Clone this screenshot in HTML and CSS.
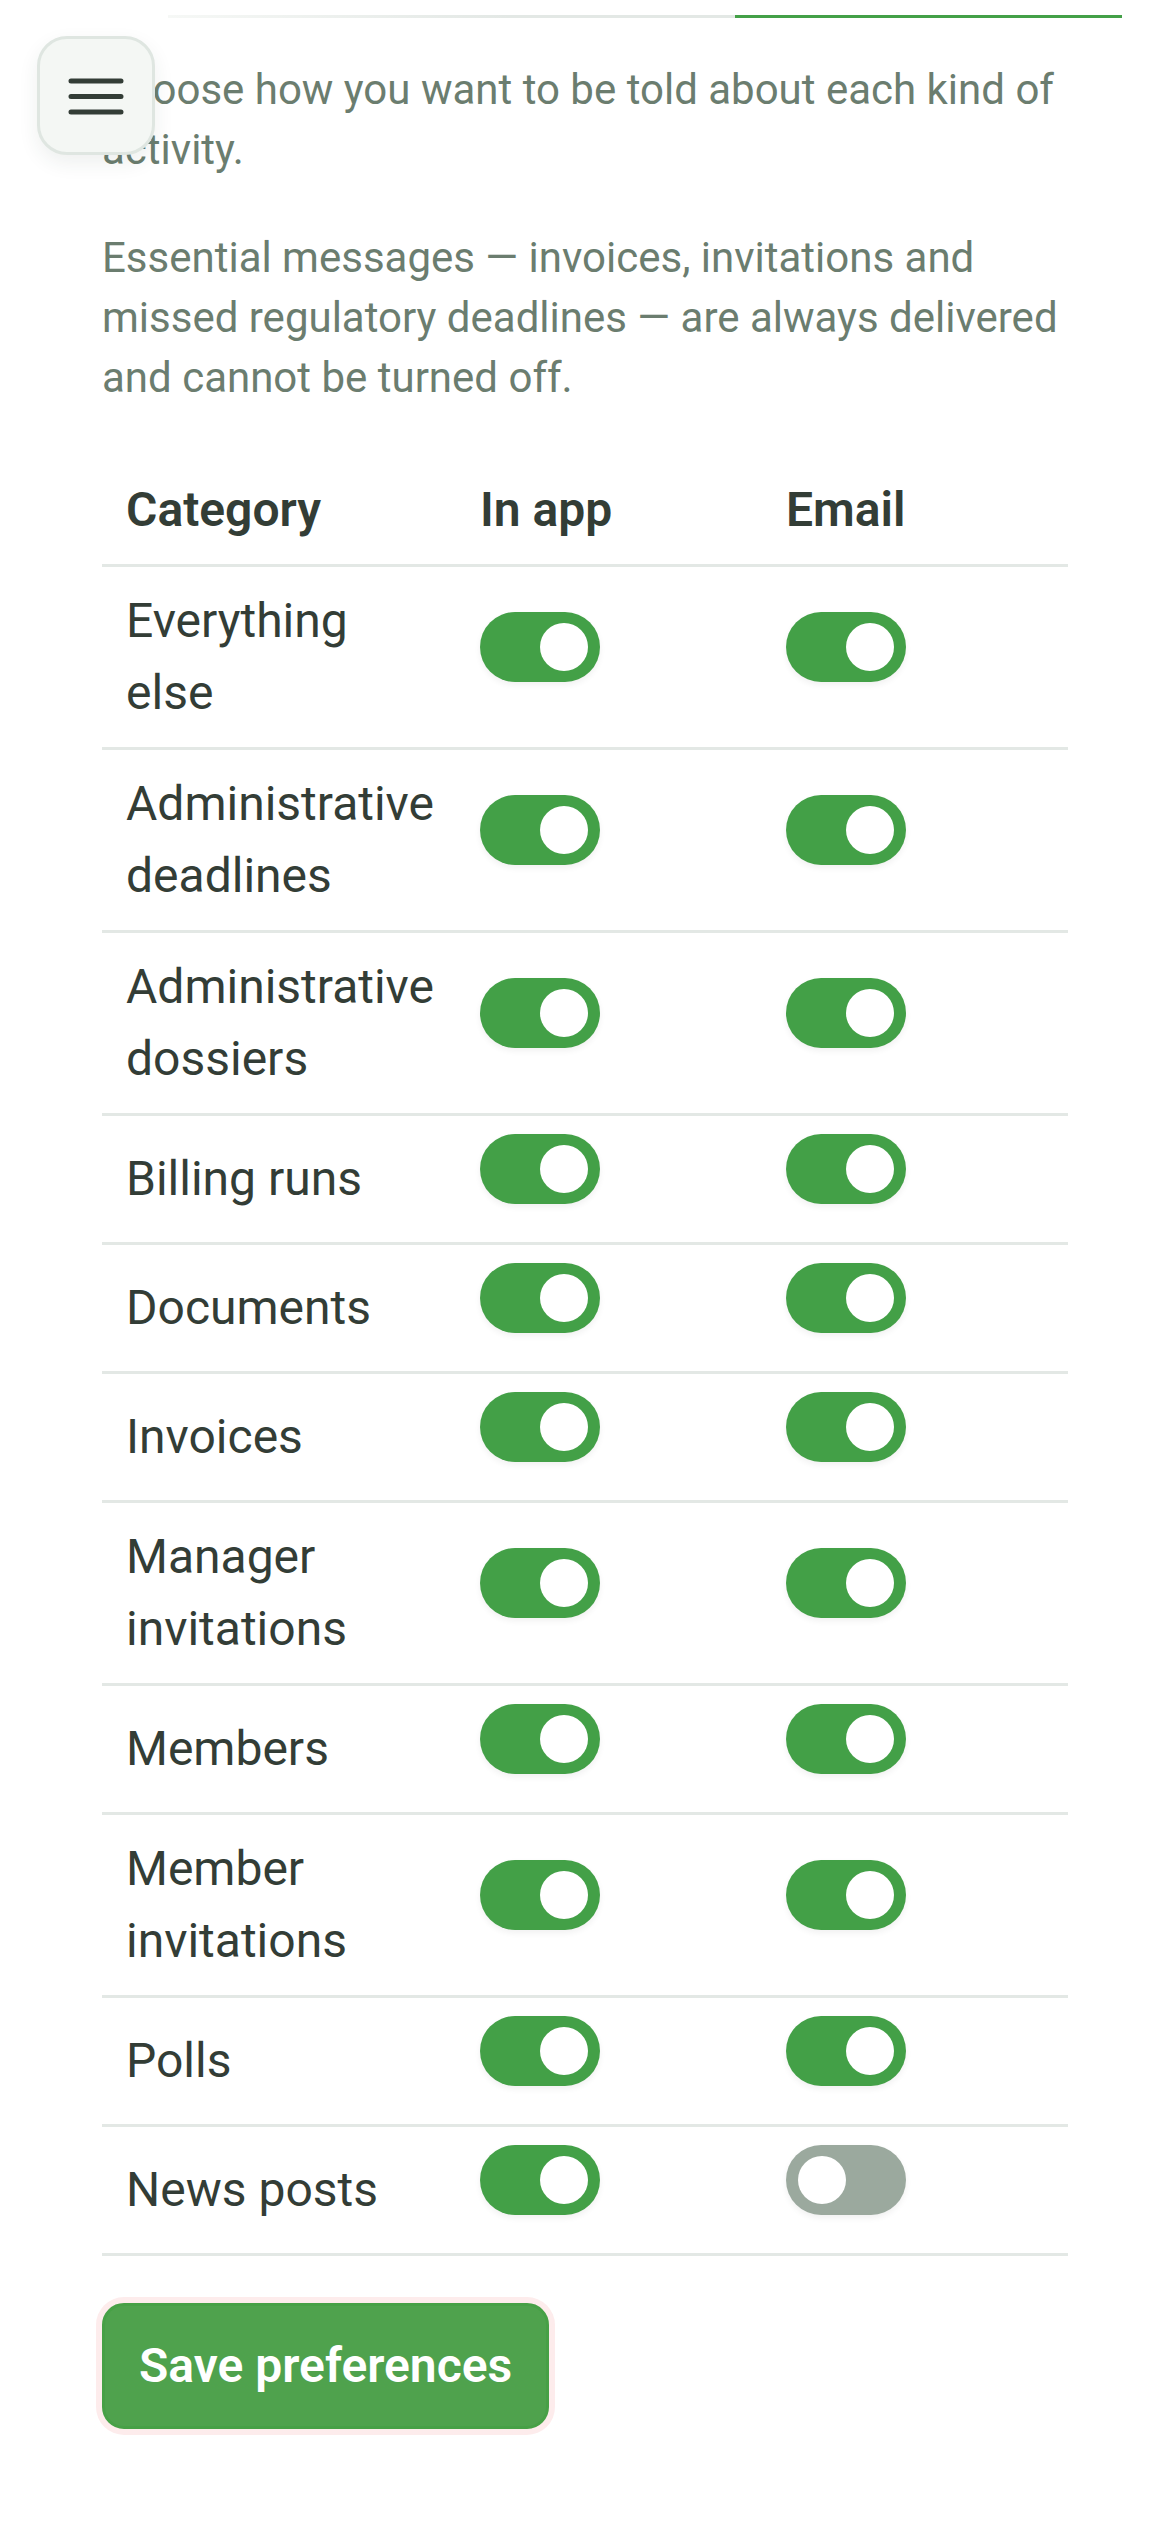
FILE: index.html
```html
<!doctype html>
<html lang="en">
<head>
	<meta charset="UTF-8" />
	<title>Notification preferences</title>
	<link rel="stylesheet" href="styles.css">
</head>
<body>
	<button class="menu-btn" type="button" aria-label="Menu">
		<svg width="56" height="40" viewBox="0 0 56 40">
			<path d="M3 5h50M3 20.5h50M3 36h50" stroke="#333d36" stroke-width="5" stroke-linecap="round" fill="none"/>
		</svg>
	</button>

	<div class="tab-rule">
		<span class="tab-rule-rest"></span>
		<span class="tab-rule-active"></span>
	</div>

	<main class="page">
		<p class="lead">Choose how you want to be told about each kind of activity.</p>
		<p class="lead">Essential messages — invoices, invitations and missed regulatory deadlines — are always delivered and cannot be turned off.</p>

		<table class="prefs">
			<thead>
				<tr>
					<th class="col-cat">Category</th>
					<th class="col-chan">In app</th>
					<th class="col-chan">Email</th>
				</tr>
			</thead>
			<tbody>
				<tr>
					<td>Everything else</td>
					<td><label class="switch"><input type="checkbox" checked><span class="track"></span></label></td>
					<td><label class="switch"><input type="checkbox" checked><span class="track"></span></label></td>
				</tr>
				<tr>
					<td>Administrative deadlines</td>
					<td><label class="switch"><input type="checkbox" checked><span class="track"></span></label></td>
					<td><label class="switch"><input type="checkbox" checked><span class="track"></span></label></td>
				</tr>
				<tr>
					<td>Administrative dossiers</td>
					<td><label class="switch"><input type="checkbox" checked><span class="track"></span></label></td>
					<td><label class="switch"><input type="checkbox" checked><span class="track"></span></label></td>
				</tr>
				<tr>
					<td>Billing runs</td>
					<td><label class="switch"><input type="checkbox" checked><span class="track"></span></label></td>
					<td><label class="switch"><input type="checkbox" checked><span class="track"></span></label></td>
				</tr>
				<tr>
					<td>Documents</td>
					<td><label class="switch"><input type="checkbox" checked><span class="track"></span></label></td>
					<td><label class="switch"><input type="checkbox" checked><span class="track"></span></label></td>
				</tr>
				<tr>
					<td>Invoices</td>
					<td><label class="switch"><input type="checkbox" checked><span class="track"></span></label></td>
					<td><label class="switch"><input type="checkbox" checked><span class="track"></span></label></td>
				</tr>
				<tr>
					<td>Manager invitations</td>
					<td><label class="switch"><input type="checkbox" checked><span class="track"></span></label></td>
					<td><label class="switch"><input type="checkbox" checked><span class="track"></span></label></td>
				</tr>
				<tr>
					<td>Members</td>
					<td><label class="switch"><input type="checkbox" checked><span class="track"></span></label></td>
					<td><label class="switch"><input type="checkbox" checked><span class="track"></span></label></td>
				</tr>
				<tr>
					<td>Member invitations</td>
					<td><label class="switch"><input type="checkbox" checked><span class="track"></span></label></td>
					<td><label class="switch"><input type="checkbox" checked><span class="track"></span></label></td>
				</tr>
				<tr>
					<td>Polls</td>
					<td><label class="switch"><input type="checkbox" checked><span class="track"></span></label></td>
					<td><label class="switch"><input type="checkbox" checked><span class="track"></span></label></td>
				</tr>
				<tr>
					<td>News posts</td>
					<td><label class="switch"><input type="checkbox" checked><span class="track"></span></label></td>
					<td><label class="switch"><input type="checkbox"><span class="track"></span></label></td>
				</tr>
			</tbody>
		</table>

		<button class="btn-save" type="button">Save preferences</button>
	</main>
</body>
</html>
```

FILE: styles.css
```css
body{margin: 0;padding: 0;background: #fff;color: #333d36;font-family: Roboto, "Noto Sans", sans-serif;}

/* floating menu button */
.menu-btn{
	position: fixed;left: 37px;top: 36px;
	width: 118px;height: 119px;
	display: flex;align-items: center;justify-content: center;
	padding: 0;
	background: #f4f7f4;
	border: 3px solid #dfe6e1;border-radius: 30px;
	box-shadow: 0 8px 20px rgba(40,60,45,.08);
}
.menu-btn svg{display: block;}

/* bottom edge of the tab strip, scrolled out of view */
.tab-rule{display: flex;height: 3px;margin: 15px 48px 0 168px;}
.tab-rule-rest{flex: 1;background: linear-gradient(to right, #f6f8f6, #e3e8e5 60%);}
.tab-rule-active{width: 387px;background: #43a047;}

.page{padding: 42px 102px 80px;}

.lead{margin: 0 0 48px;font-size: 42px;line-height: 1.43;color: #6b7d6f;}

/* preferences table */
.prefs{width: 100%;border-collapse: collapse;table-layout: fixed;font-size: 48px;line-height: 1.5;}
.prefs th,.prefs td{padding: 18px 12px 18px 24px;text-align: left;vertical-align: middle;border-bottom: 3px solid #e3e8e5;}
.prefs th{font-weight: 600;color: #333d36;}
.prefs td{color: #333d36;}
.col-cat{width: 318px;}
.col-chan{width: 270px;}

.switch{display: inline-block;position: relative;cursor: pointer;}
.switch input{position: absolute;opacity: 0;width: 0;height: 0;margin: 0;}
.track{
	display: block;position: relative;
	width: 120px;height: 70px;border-radius: 35px;
	background: #9ba99e;
	box-shadow: 0 3px 6px rgba(0,0,0,.06);
}
.track::after{
	content: "";position: absolute;top: 11px;left: 12px;
	width: 48px;height: 48px;border-radius: 50%;
	background: #fff;
}
.switch input:checked + .track{background: #43a047;}
.switch input:checked + .track::after{left: 60px;}

.btn-save{
	margin-top: 47px;
	padding: 24px 34px;
	font-family: inherit;font-size: 48px;line-height: 1.5;font-weight: 600;
	color: #fff;
	background: #4fa24d;
	border: 3px solid #47a046;border-radius: 22px;
	box-shadow: 0 0 0 6px #fdecec;
}
```
